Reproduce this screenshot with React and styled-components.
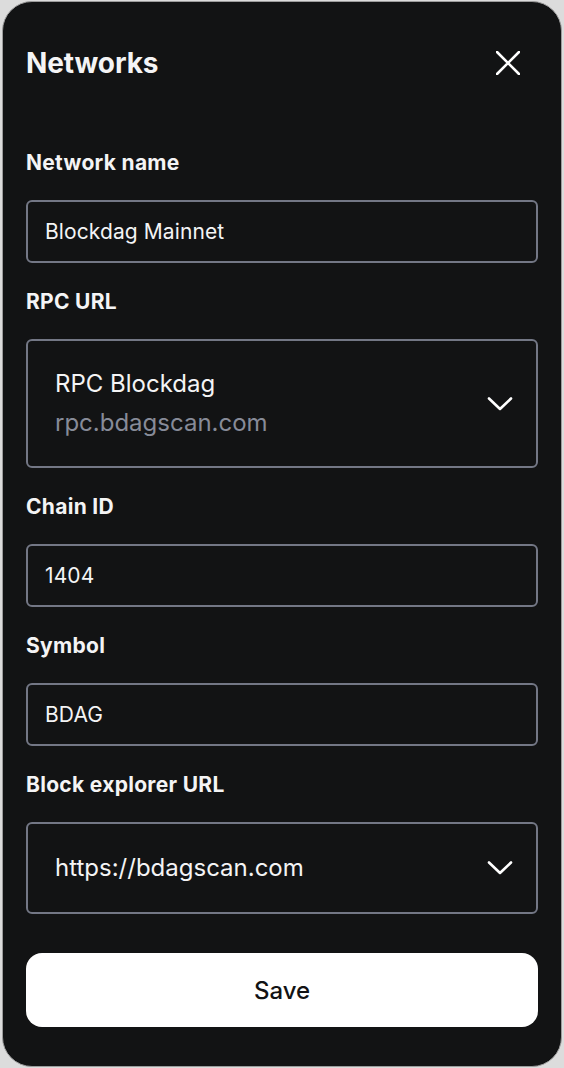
import React from "react";
import styled, { createGlobalStyle } from "styled-components";

const GlobalStyle = createGlobalStyle`
  html, body {
    margin: 0;
    padding: 0;
    background: #dcdcdc;
  }
  * {
    box-sizing: border-box;
  }
`;

const Card = styled.div`
  margin: 1px 2px;
  height: 1066px;
  border: 1px solid #9c9c9c;
  border-radius: 30px;
  background: #121314;
  padding: 45px 23px 39px;
  display: flex;
  flex-direction: column;
  font-family: Inter, "Noto Sans", sans-serif;
  color: #f4f4f5;
`;

const Header = styled.div`
  display: flex;
  align-items: center;
  justify-content: space-between;
  height: 32px;
  margin-bottom: 72px;
`;

const Title = styled.h1`
  margin: 0;
  font-size: 28px;
  line-height: 32px;
  font-weight: 700;
  letter-spacing: -0.1px;
`;

const CloseButton = styled.button`
  display: flex;
  align-items: center;
  justify-content: center;
  width: 24px;
  height: 24px;
  margin-right: 18px;
  padding: 0;
  border: 0;
  background: none;
  color: #fff;
  cursor: pointer;
`;

const Form = styled.div`
  display: flex;
  flex-direction: column;
  gap: 27px;
`;

const Field = styled.div`
  display: flex;
  flex-direction: column;
  gap: 25px;
`;

const Label = styled.label`
  font-size: 21px;
  line-height: 24px;
  font-weight: 700;
  letter-spacing: 0.3px;
`;

const Input = styled.div`
  height: 63px;
  border: 2px solid #737785;
  border-radius: 6px;
  padding: 0 17px;
  display: flex;
  align-items: center;
  font-size: 21px;
  letter-spacing: 0.1px;
  color: #f4f4f5;
`;

const Select = styled.div`
  height: ${p => p.$height}px;
  border: 2px solid #737785;
  border-radius: 6px;
  padding: 0 23px 0 27px;
  display: flex;
  align-items: center;
  justify-content: space-between;
`;

const SelectText = styled.div`
  display: flex;
  flex-direction: column;
  gap: 11px;
`;

const Primary = styled.span`
  font-size: 24px;
  line-height: 28px;
  color: #f4f4f5;
`;

const Secondary = styled.span`
  font-size: 24px;
  line-height: 28px;
  color: #878b98;
`;

const SaveButton = styled.button`
  margin-top: 39px;
  height: 74px;
  border: 0;
  border-radius: 16px;
  background: #fff;
  color: #121314;
  font-family: Inter, "Noto Sans", sans-serif;
  font-size: 24px;
  font-weight: 500;
  cursor: pointer;
`;

const CloseIcon = () => (
  <svg width="24" height="24" viewBox="0 0 24 24" fill="none">
    <path d="M1 1L23 23M23 1L1 23" stroke="currentColor" strokeWidth="2.6" strokeLinecap="round" />
  </svg>
);

const Chevron = () => (
  <svg width="26" height="16" viewBox="0 0 26 16" fill="none">
    <path d="M2 2.5L13 13L24 2.5" stroke="#fff" strokeWidth="2.6" strokeLinecap="round" strokeLinejoin="round" />
  </svg>
);

export default function App() {
  return (
    <>
      <GlobalStyle />
      <Card>
        <Header>
          <Title>Networks</Title>
          <CloseButton aria-label="Close">
            <CloseIcon />
          </CloseButton>
        </Header>
        <Form>
          <Field>
            <Label>Network name</Label>
            <Input>Blockdag Mainnet</Input>
          </Field>
          <Field>
            <Label>RPC URL</Label>
            <Select $height={129}>
              <SelectText>
                <Primary>RPC Blockdag</Primary>
                <Secondary>rpc.bdagscan.com</Secondary>
              </SelectText>
              <Chevron />
            </Select>
          </Field>
          <Field>
            <Label>Chain ID</Label>
            <Input>1404</Input>
          </Field>
          <Field>
            <Label>Symbol</Label>
            <Input>BDAG</Input>
          </Field>
          <Field>
            <Label>Block explorer URL</Label>
            <Select $height={92}>
              <SelectText>
                <Primary>https://bdagscan.com</Primary>
              </SelectText>
              <Chevron />
            </Select>
          </Field>
        </Form>
        <SaveButton>Save</SaveButton>
      </Card>
    </>
  );
}
